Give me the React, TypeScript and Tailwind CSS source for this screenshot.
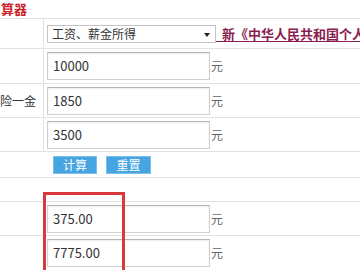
const font = { fontFamily: '"Noto Sans CJK SC", "Noto Sans", sans-serif' }

function Field({ value }: { value?: string }) {
  return (
    <div className="flex items-center">
      <div className="flex h-[28px] w-[163px] items-center border border-[#cfcfcf] border-t-[#b5b5b5] bg-white pl-[5px] text-[13px] text-[#333] shadow-[inset_0_1px_2px_rgba(0,0,0,0.08)]">
        {value}
      </div>
      <span className="ml-[1px] text-[12px] text-[#666]">元</span>
    </div>
  )
}

function Row({
  label,
  height,
  children,
}: {
  label?: string
  height: string
  children?: React.ReactNode
}) {
  return (
    <div className={`flex border-b border-[#e2e2e2] ${height}`}>
      <div className="flex w-[44px] shrink-0 items-center justify-end border-r border-[#e2e2e2] pr-[7px] text-[12px] text-[#333] whitespace-nowrap">
        {label}
      </div>
      <div className="flex flex-1 items-center pl-[3px]">{children}</div>
    </div>
  )
}

export default function App() {
  return (
    <div className="relative h-[270px] w-[360px] overflow-hidden bg-white" style={font}>
      <div className="flex h-[18px] items-center pl-[1px] text-[13px] font-bold text-[#cc1f2d]">
        算器
      </div>

      <div className="border-t border-[#e2e2e2]">
        <Row height="h-[30px]">
          <div className="flex min-w-0 items-center whitespace-nowrap">
            <div className="relative flex h-[18px] w-[169px] shrink-0 items-center border border-[#c4c4c4] bg-white pl-[4px] text-[12px] text-[#333]">
              工资、薪金所得
              <span className="absolute right-[5px] top-[7px] h-0 w-0 border-x-[3px] border-t-[4px] border-x-transparent border-t-[#222]" />
            </div>
            <a className="text-[13px] font-bold text-[#8a1c4f] underline underline-offset-2">
              {'\u00a0 新《中华人民共和国个人所得税法》'}
            </a>
          </div>
        </Row>
        <Row height="h-[35px]">
          <Field value="10000" />
        </Row>
        <Row height="h-[34px]" label="险一金">
          <Field value="1850" />
        </Row>
        <Row height="h-[34px]">
          <Field value="3500" />
        </Row>

        <div className="flex h-[26px] items-center gap-[9px] border-b border-[#e2e2e2] pl-[53px]">
          <button className="flex h-[18px] w-[44px] items-center justify-center border border-[#7cc0ea] bg-[#46a5e0] text-[12px] text-white">
            计算
          </button>
          <button className="flex h-[18px] w-[45px] items-center justify-center border border-[#7cc0ea] bg-[#46a5e0] text-[12px] text-white">
            重置
          </button>
        </div>
        <div className="h-[24px] border-b border-[#e2e2e2]" />

        <Row height="h-[34px]">
          <Field value="375.00" />
        </Row>
        <Row height="h-[35px]">
          <Field value="7775.00" />
        </Row>
      </div>

      <div className="absolute left-[43px] top-[192px] h-[100px] w-[82px] border-[3px] border-[#d8393c]" />
    </div>
  )
}
